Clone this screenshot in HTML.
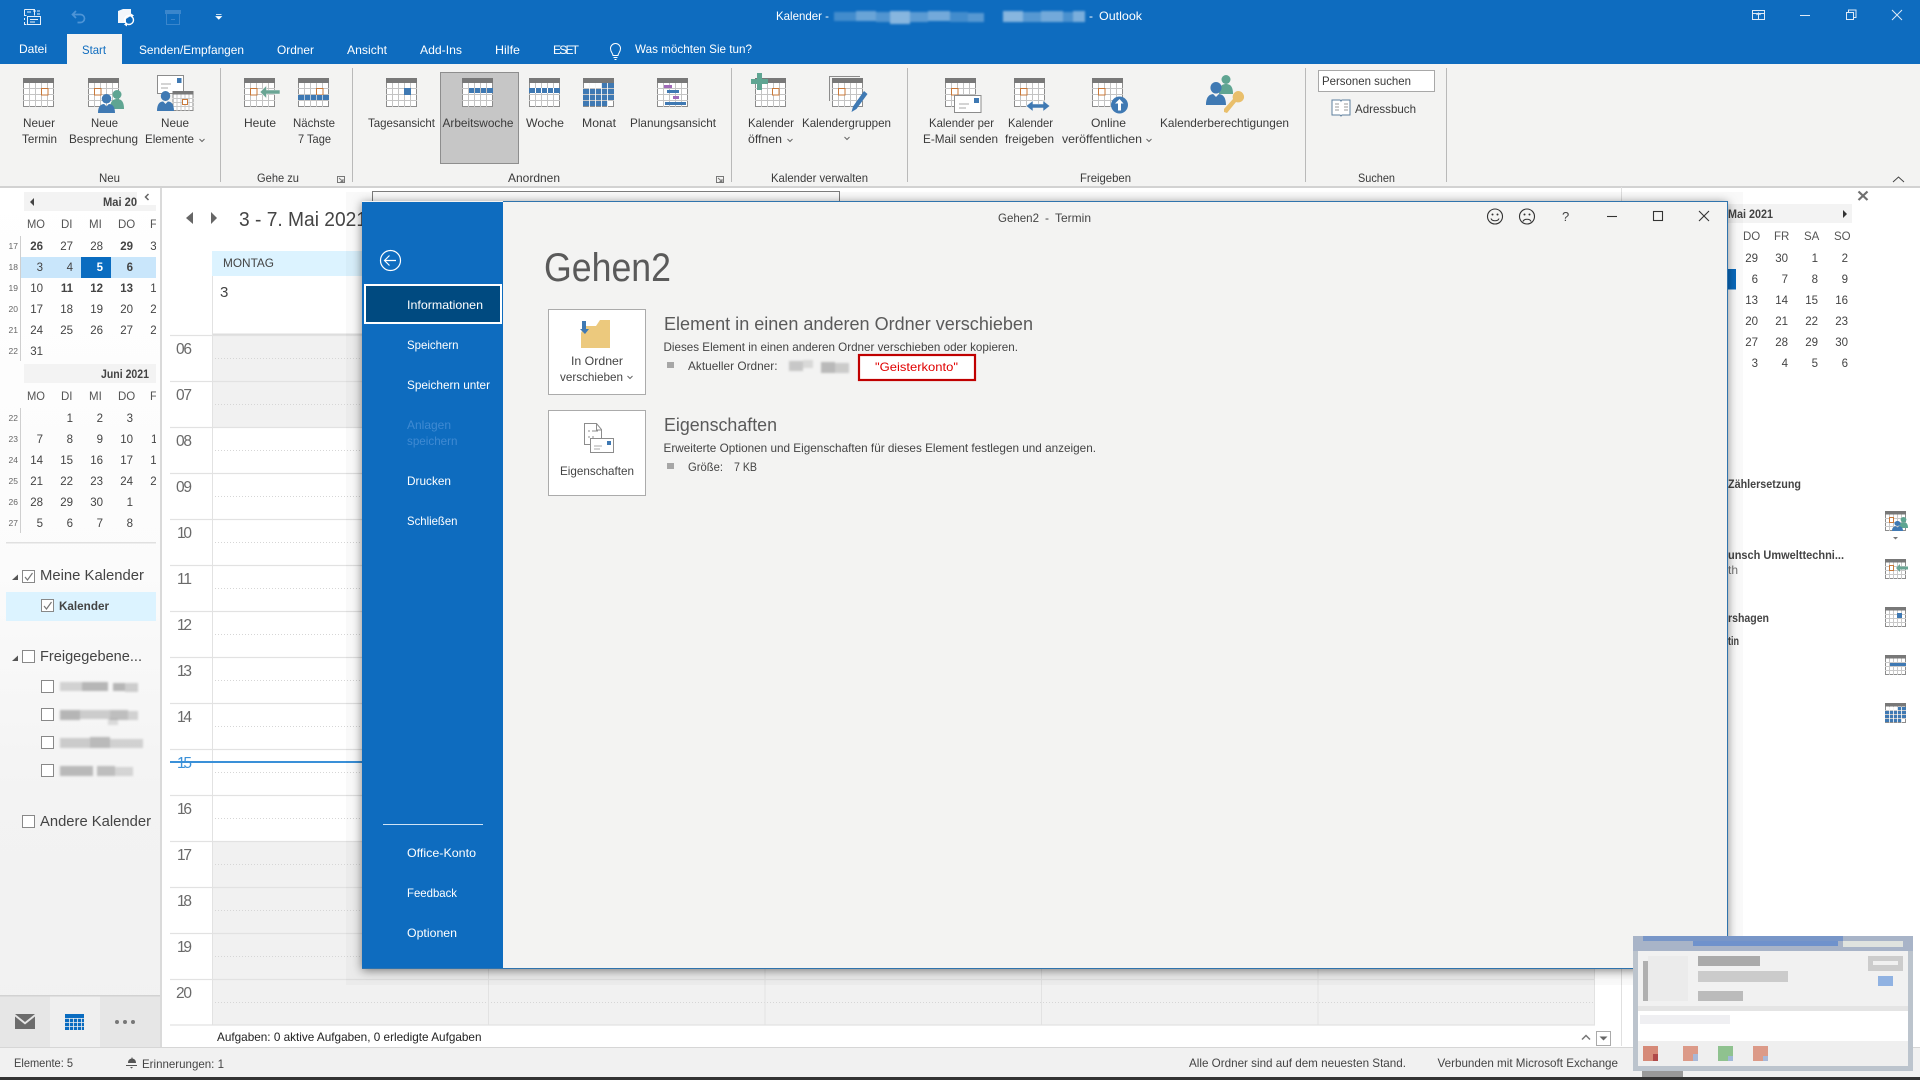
<!DOCTYPE html>
<html lang="de"><head><meta charset="utf-8"><title>Kalender - Outlook</title>
<style>
html,body{margin:0;padding:0;background:#fff;width:1920px;height:1080px;overflow:hidden}
svg{display:block;font-family:"Liberation Sans",sans-serif}
text{font-size:12px;fill:#444}
.w text,text.w{fill:#fff}
.b{font-weight:bold}
.n text{font-size:11.5px;text-anchor:end;fill:#444}
.wk text{font-size:8.5px;text-anchor:end;fill:#666}
.h text{font-size:11.5px;fill:#555}
.hr text{font-size:15.5px;fill:#6a6a6a}
.rb text{font-size:12px;fill:#3a3a3a}
.bl{filter:blur(1px)}
</style></head><body>
<svg xmlns="http://www.w3.org/2000/svg" width="1920" height="1080" viewBox="0 0 1920 1080">
<defs>
<symbol id="c" width="31" height="29" viewBox="0 0 31 29" overflow="visible">
<rect x=".5" y=".5" width="30" height="28" fill="#fff" stroke="#8c8c8c"/>
<path d="M6.5 4V29M12.5 4V29M18.5 4V29M24.5 4V29M0 10.5H31M0 16.5H31M0 22.5H31" stroke="#c4c4c4" fill="none"/>
<rect width="31" height="5" fill="#787878"/>
</symbol>
<symbol id="s" width="21" height="20" viewBox="0 0 21 20" overflow="visible">
<rect x=".5" y=".5" width="20" height="19" fill="#fff" stroke="#8c8c8c"/>
<path d="M4.5 3V20M8.5 3V20M12.5 3V20M16.5 3V20M0 7.5H21M0 11.5H21M0 15.5H21" stroke="#c9c9c9" fill="none"/>
<rect width="21" height="3.5" fill="#787878"/>
</symbol>
<symbol id="pb" viewBox="0 0 18 20" preserveAspectRatio="none" overflow="visible">
<circle cx="9" cy="5" r="5" fill="#3f79b3"/><path d="M0 20C0 13 3 10.500 6.500 10.500L9 13 11.500 10.500C15 10.500 18 13 18 20Z" fill="#3f79b3"/>
</symbol>
<symbol id="pg" viewBox="0 0 14 19" preserveAspectRatio="none" overflow="visible">
<circle cx="7" cy="4.500" r="4.500" fill="#5fa592"/><path d="M0 19C0 11 3 9 7 9S14 11 14 19Z" fill="#5fa592"/>
</symbol>
<clipPath id="cl1"><rect x="0" y="190" width="156" height="350"/></clipPath>
<linearGradient id="nav" x1="0" y1="0" x2="0" y2="1"><stop offset="0" stop-color="#fff"/><stop offset=".45" stop-color="#fbfbfb"/><stop offset=".7" stop-color="#f3f3f3"/><stop offset="1" stop-color="#f1f1f1"/></linearGradient>
</defs>

<rect width="1920" height="1080" fill="#fff"/>
<rect width="1920" height="64" fill="#0e6cbf"/>
<rect x="67" y="34" width="55" height="30" fill="#f3f3f2"/>
<rect y="64" width="1920" height="122" fill="#f3f3f2"/>
<rect y="186" width="1920" height="2" fill="#d2d2d2"/>

<!-- QAT -->
<path d="M24.500 9.500h10v6M24.500 9.500v6h2M24.500 18v2M24.500 22v2.500h2M27 12h4M33 11h3M37 11h3M37 14h3" fill="none" stroke="#e6f0fa"/>
<rect x="27.500" y="16.500" width="13" height="8" fill="none" stroke="#e6f0fa"/><path d="M30 19.500h8M30 22h5" stroke="#e6f0fa"/>
<path d="M76 11l-3.500 3.500 3.500 3.500M73 14.500h7.500a4 4 0 0 1 0 8h-3" fill="none" stroke="#4d94d6" stroke-width="1.700"/>
<path d="M118 11l5-2h8v7l-2 1-3 2v4h-8z" fill="#f2f6fb"/>
<circle cx="129" cy="20" r="4.500" fill="none" stroke="#fff" stroke-width="1.400"/><path d="M131 13.500l3 2-3 2zM127 26.500l-3-2 3-2z" fill="#fff"/>
<rect x="165" y="10" width="16" height="4" fill="#3a86cc"/><rect x="166.500" y="13.500" width="13" height="11" fill="none" stroke="#3a86cc"/><path d="M171 19.500h4" stroke="#3a86cc"/>
<path d="M216 14.500h5.500M216 16.500h5.500l-2.700 2.700z" fill="#fff" stroke="#fff" stroke-width=".7"/>

<text class="w" x="776" y="20" textLength="53" lengthAdjust="spacingAndGlyphs">Kalender -</text>
<g fill="#fff" class="bl">
<rect x="834" y="12" width="22" height="9" opacity=".22"/><rect x="856" y="11" width="20" height="10" opacity=".38"/><rect x="876" y="12" width="14" height="10" opacity=".28"/><rect x="890" y="11" width="20" height="13" opacity=".5"/><rect x="910" y="12" width="18" height="10" opacity=".32"/><rect x="928" y="11" width="22" height="10" opacity=".42"/><rect x="950" y="12" width="18" height="10" opacity=".22"/><rect x="968" y="13" width="16" height="9" opacity=".3"/><rect x="1003" y="11" width="20" height="11" opacity=".5"/><rect x="1023" y="12" width="18" height="10" opacity=".3"/><rect x="1041" y="11" width="22" height="11" opacity=".42"/><rect x="1063" y="12" width="10" height="10" opacity=".25"/><rect x="1073" y="11" width="12" height="11" opacity=".45"/>
</g>
<text class="w" x="1089" y="20">-</text>
<text class="w" x="1099" y="20" textLength="43" lengthAdjust="spacingAndGlyphs">Outlook</text>

<g class="w">
<text x="19" y="53" textLength="28" lengthAdjust="spacingAndGlyphs">Datei</text>
<text x="139" y="54" textLength="105" lengthAdjust="spacingAndGlyphs">Senden/Empfangen</text>
<text x="277" y="54" textLength="37" lengthAdjust="spacingAndGlyphs">Ordner</text>
<text x="347" y="54" textLength="40" lengthAdjust="spacingAndGlyphs">Ansicht</text>
<text x="420" y="54" textLength="42" lengthAdjust="spacingAndGlyphs">Add-Ins</text>
<text x="495" y="54" textLength="25" lengthAdjust="spacingAndGlyphs">Hilfe</text>
<text x="553" y="54" textLength="25" lengthAdjust="spacing" style="letter-spacing:-1px">ESET</text>
<text x="635" y="53" textLength="117" lengthAdjust="spacingAndGlyphs">Was möchten Sie tun?</text>
</g>
<text x="82" y="54" textLength="24" lengthAdjust="spacingAndGlyphs" style="fill:#0e6cbf">Start</text>
<path d="M613 55.500c0-2-2.500-3.500-2.500-7a5 5 0 0 1 10 0c0 3.500-2.500 5-2.500 7zM613.500 57.500h4M614.500 59.500h2" fill="none" stroke="#fff"/>

<g fill="none" stroke="#dfeaf6">
<rect x="1752.500" y="10.500" width="12" height="9"/><path d="M1752 13.500h13M1758.500 19v-6M1756.500 15l2-2 2 2"/>
<path d="M1800 15.500h10"/>
<rect x="1846.500" y="12.500" width="7" height="7"/><path d="M1848.500 12v-2h7.500v7.500h-2"/>
<path d="M1892 10l10 10M1902 10l-10 10"/>
</g>
<path d="M1893 182l5.500-5 5.500 5" fill="none" stroke="#444"/>

<path d="M220.500 68V182M352.500 68V182M731.500 68V182M907.500 68V182M1305.500 68V182M1446.500 68V182" stroke="#b9b9b9"/>
<rect x="440.500" y="72.500" width="78" height="91" fill="#c6c6c6" stroke="#8e8e8e"/>

<!-- ribbon icons -->
<use href="#c" x="23" y="78"/><rect x="41.500" y="88.500" width="6.500" height="6.500" fill="#fff" stroke="#c9793a"/>
<use href="#c" x="88" y="78"/><rect x="94.500" y="88.500" width="6.500" height="6.500" fill="#fff" stroke="#c9793a"/>
<use href="#pg" x="110" y="90" width="14" height="19"/><use href="#pb" x="98" y="94" width="17" height="19"/>
<rect x="157.500" y="75.500" width="26" height="18" fill="#fff" stroke="#8c8c8c"/><rect x="177" y="78" width="4.500" height="5" fill="#3f79b3"/><path d="M161 84h10M161 88h7" stroke="#aaa"/>
<use href="#s" x="172.500" y="91"/><rect x="182.500" y="99.500" width="5" height="5" fill="#fff" stroke="#c9793a"/>
<use href="#pb" x="157" y="91" width="17" height="20"/>
<use href="#c" x="244" y="78"/><rect x="250.500" y="88.500" width="6.500" height="6.500" fill="#fff" stroke="#c9793a"/>
<path d="M260 92l6.500-6.500V90H280v4H266.500v4.500z" fill="#6aa594" stroke="#f3f3f2" stroke-width=".6"/>
<use href="#c" x="298" y="78"/><rect x="316.500" y="88.500" width="6.500" height="6.500" fill="#fff" stroke="#c9793a"/><rect x="298" y="95" width="31" height="5" fill="#3f79b3"/><path d="M304.500 95v5M310.500 95v5M316.500 95v5M322.500 95v5" stroke="#fff" opacity=".6"/>
<use href="#c" x="386" y="78"/><rect x="404" y="88" width="7" height="7" fill="#3f79b3"/>
<use href="#c" x="462" y="78"/><path d="M469 88h5v5h-5zM475 88h5v5h-5zM481 88h5v5h-5zM487 88h6v5h-6z" fill="#3f79b3"/>
<use href="#c" x="529" y="78"/><rect x="529" y="88" width="31" height="5" fill="#3f79b3"/><path d="M535.500 88v5M541.500 88v5M547.500 88v5M553.500 88v5" stroke="#fff"/>
<use href="#c" x="583" y="78"/><path d="M601 83h13v5h-13zM583 89h31v5H583zM583 95h31v5H583zM583 101h25v5h-25z" fill="#3f79b3"/><path d="M589.500 83v24M595.500 83v24M601.500 83v24M607.500 83v24" stroke="#fff" opacity=".85"/>
<use href="#c" x="657" y="78"/><rect x="664" y="85" width="8" height="3" fill="#a16bb9"/><rect x="667" y="90" width="12" height="3" fill="#3f79b3"/><rect x="673" y="96" width="6" height="3" fill="#a16bb9"/><rect x="665" y="102" width="21" height="3" fill="#3f79b3"/>

<use href="#c" x="755" y="78"/><rect x="772.500" y="88.500" width="6.500" height="6.500" fill="#fff" stroke="#c9793a"/>
<path d="M757 73h5v6h6v5h-6v6h-5v-6h-6v-5h6z" fill="#5fa592"/>
<path d="M829.500 101V76.500H860" fill="none" stroke="#8c8c8c"/>
<use href="#c" x="832" y="78"/><rect x="838.500" y="88.500" width="6.500" height="6.500" fill="#fff" stroke="#c9793a"/>
<path d="M864 91l3.500 3-11 15-5 3 1.500-5.500z" fill="#3f79b3"/>

<use href="#c" x="945" y="78"/><rect x="951.500" y="88.500" width="6.500" height="6.500" fill="#fff" stroke="#c9793a"/>
<rect x="954.500" y="95.500" width="26.500" height="17" fill="#fff" stroke="#8c8c8c"/><rect x="974" y="98" width="5" height="5" fill="#3f79b3"/><path d="M959 104h10M959 108h7" stroke="#aaa"/>
<use href="#c" x="1014" y="78"/><rect x="1020.500" y="88.500" width="6.500" height="6.500" fill="#fff" stroke="#c9793a"/>
<path d="M1026 106l7-5.500v3.500h10v-3.500l7 5.500-7 5.500V108h-10v3.500z" fill="#3f79b3" stroke="#f3f3f2" stroke-width=".6"/>
<use href="#c" x="1092" y="78"/><rect x="1098.500" y="88.500" width="6.500" height="6.500" fill="#fff" stroke="#c9793a"/>
<circle cx="1119.500" cy="105" r="8.500" fill="#3f79b3"/><path d="M1119.500 99l4 4.500h-2.500v7h-3v-7H1115z" fill="#fff"/>
<use href="#pg" x="1219" y="75" width="14" height="19"/><use href="#pb" x="1206" y="82" width="20" height="23"/>
<path d="M1238 91a6 6 0 0 1 6 7 6 6 0 0 1-8 4l-9 11-3-1v-3l9-10a6 6 0 0 1 5-8z" fill="#e9bf6c"/>

<rect x="1318.500" y="70.500" width="116" height="21" fill="#fff" stroke="#a8a8a8"/>
<path d="M1332 100h8a2 2 0 0 1 1 1 2 2 0 0 1 1-1h8v15h-8l-1 1-1-1h-8z" fill="#fff" stroke="#5e7f9e"/><path d="M1335 104h4M1335 107h4M1335 110h4M1344 104h4M1344 107h4M1344 110h4" stroke="#999"/>

<g class="rb">
<text x="23" y="127" textLength="32" lengthAdjust="spacingAndGlyphs">Neuer</text>
<text x="22" y="143" textLength="35" lengthAdjust="spacingAndGlyphs">Termin</text>
<text x="91" y="127" textLength="27" lengthAdjust="spacingAndGlyphs">Neue</text>
<text x="69" y="143" textLength="69" lengthAdjust="spacingAndGlyphs">Besprechung</text>
<text x="161" y="127" textLength="28" lengthAdjust="spacingAndGlyphs">Neue</text>
<text x="145" y="143" textLength="49" lengthAdjust="spacingAndGlyphs">Elemente</text>
<text x="244" y="127" textLength="32" lengthAdjust="spacingAndGlyphs">Heute</text>
<text x="293" y="127" textLength="42" lengthAdjust="spacingAndGlyphs">Nächste</text>
<text x="298" y="143" textLength="33" lengthAdjust="spacingAndGlyphs">7 Tage</text>
<text x="368" y="127" textLength="67" lengthAdjust="spacingAndGlyphs">Tagesansicht</text>
<text x="442.500" y="127" textLength="71" lengthAdjust="spacingAndGlyphs">Arbeitswoche</text>
<text x="526" y="127" textLength="38" lengthAdjust="spacingAndGlyphs">Woche</text>
<text x="582" y="127" textLength="34" lengthAdjust="spacingAndGlyphs">Monat</text>
<text x="630" y="127" textLength="86" lengthAdjust="spacingAndGlyphs">Planungsansicht</text>
<text x="748" y="127" textLength="46" lengthAdjust="spacingAndGlyphs">Kalender</text>
<text x="748" y="143" textLength="34" lengthAdjust="spacingAndGlyphs">öffnen</text>
<text x="802" y="127" textLength="89" lengthAdjust="spacingAndGlyphs">Kalendergruppen</text>
<text x="929" y="127" textLength="65" lengthAdjust="spacingAndGlyphs">Kalender per</text>
<text x="923" y="143" textLength="75" lengthAdjust="spacingAndGlyphs">E-Mail senden</text>
<text x="1008" y="127" textLength="45" lengthAdjust="spacingAndGlyphs">Kalender</text>
<text x="1005" y="143" textLength="49" lengthAdjust="spacingAndGlyphs">freigeben</text>
<text x="1091" y="127" textLength="35" lengthAdjust="spacingAndGlyphs">Online</text>
<text x="1062" y="143" textLength="80" lengthAdjust="spacingAndGlyphs">veröffentlichen</text>
<text x="1160" y="127" textLength="129" lengthAdjust="spacingAndGlyphs">Kalenderberechtigungen</text>
<text x="1322" y="85" textLength="89" lengthAdjust="spacingAndGlyphs">Personen suchen</text>
<text x="1355" y="113" textLength="61" lengthAdjust="spacingAndGlyphs">Adressbuch</text>
<text x="99" y="182" textLength="21" lengthAdjust="spacingAndGlyphs">Neu</text>
<text x="257" y="182" textLength="42" lengthAdjust="spacingAndGlyphs">Gehe zu</text>
<text x="508" y="182" textLength="52" lengthAdjust="spacingAndGlyphs">Anordnen</text>
<text x="771" y="182" textLength="97" lengthAdjust="spacingAndGlyphs">Kalender verwalten</text>
<text x="1080" y="182" textLength="51" lengthAdjust="spacingAndGlyphs">Freigeben</text>
<text x="1358" y="182" textLength="37" lengthAdjust="spacingAndGlyphs">Suchen</text>
</g>
<path d="M199.500 139l2.500 2.500 2.500-2.500M787.500 139l2.500 2.500 2.500-2.500M844.500 137l2.500 2.500 2.500-2.500M1146.500 139l2.500 2.500 2.500-2.500" fill="none" stroke="#666"/>
<path d="M337.500 176.500h7v6h-7zM339 178l4 3.500M343 179v2.500h-2.500M716.500 176.500h7v6h-7zM718 178l4 3.500M722 179v2.500h-2.500" fill="none" stroke="#777"/>

<!-- left nav -->
<rect x="0" y="188" width="160" height="859" fill="url(#nav)"/>
<rect x="160" y="188" width="2" height="859" fill="#dadada"/>
<rect x="24" y="192" width="132" height="19" fill="#f3f3f3"/>
<path d="M30 202l4-4v8z" fill="#444"/>
<text class="b" x="103" y="206" textLength="34" lengthAdjust="spacingAndGlyphs">Mai 20</text>
<rect x="137" y="190" width="19" height="15" fill="#fff"/>
<path d="M148.500 194l-3 3 3 3" fill="none" stroke="#666" stroke-width="1.500"/>
<rect x="20" y="257" width="136" height="21" fill="#c9e6fb"/>
<rect x="81" y="257" width="30" height="21" fill="#0a6cc0"/>
<path d="M20.500 236V361M20.500 408V533" stroke="#cfcfcf"/>
<rect x="24" y="364" width="132" height="19" fill="#f3f3f3"/>
<text class="b" x="101" y="378" textLength="48" lengthAdjust="spacingAndGlyphs">Juni 2021</text>
<rect x="6" y="542" width="150" height="1.500" fill="#e0e0e0"/>

<g clip-path="url(#cl1)">
<g class="h">
<text x="27" y="228" textLength="18" lengthAdjust="spacingAndGlyphs">MO</text><text x="61" y="228">DI</text><text x="89" y="228">MI</text><text x="118" y="228">DO</text><text x="150" y="228">F</text>
<text x="27" y="400" textLength="18" lengthAdjust="spacingAndGlyphs">MO</text><text x="61" y="400">DI</text><text x="89" y="400">MI</text><text x="118" y="400">DO</text><text x="150" y="400">F</text>
</g>
<g class="n">
<text x="43" y="250" class="b">26</text><text x="73" y="250">27</text><text x="103" y="250">28</text><text x="133" y="250" class="b">29</text><text x="163" y="250">30</text>
<text x="43" y="271">3</text><text x="73" y="271">4</text><text x="103" y="271" class="b" style="fill:#fff">5</text><text x="133" y="271" class="b">6</text>
<text x="43" y="292">10</text><text x="73" y="292" class="b">11</text><text x="103" y="292" class="b">12</text><text x="133" y="292" class="b">13</text><text x="163" y="292">14</text>
<text x="43" y="313">17</text><text x="73" y="313">18</text><text x="103" y="313">19</text><text x="133" y="313">20</text><text x="163" y="313">21</text>
<text x="43" y="334">24</text><text x="73" y="334">25</text><text x="103" y="334">26</text><text x="133" y="334">27</text><text x="163" y="334">28</text>
<text x="43" y="355">31</text>
<text x="73" y="422">1</text><text x="103" y="422">2</text><text x="133" y="422">3</text>
<text x="43" y="443">7</text><text x="73" y="443">8</text><text x="103" y="443">9</text><text x="133" y="443">10</text><text x="163" y="443">11</text>
<text x="43" y="464">14</text><text x="73" y="464">15</text><text x="103" y="464">16</text><text x="133" y="464">17</text><text x="163" y="464">18</text>
<text x="43" y="485">21</text><text x="73" y="485">22</text><text x="103" y="485">23</text><text x="133" y="485">24</text><text x="163" y="485">25</text>
<text x="43" y="506">28</text><text x="73" y="506">29</text><text x="103" y="506">30</text><text x="133" y="506">1</text>
<text x="43" y="527">5</text><text x="73" y="527">6</text><text x="103" y="527">7</text><text x="133" y="527">8</text>
</g>
</g>
<g class="wk">
<text x="18" y="249">17</text><text x="18" y="270">18</text><text x="18" y="291">19</text><text x="18" y="312">20</text><text x="18" y="333">21</text><text x="18" y="354">22</text>
<text x="18" y="421">22</text><text x="18" y="442">23</text><text x="18" y="463">24</text><text x="18" y="484">25</text><text x="18" y="505">26</text><text x="18" y="526">27</text>
</g>

<path d="M12 580l6-5.500v5.500z" fill="#555"/><path d="M12 661l6-5.500v5.500z" fill="#555"/>
<g fill="#fff" stroke="#888"><rect x="22.500" y="570.500" width="12" height="12"/><rect x="22.500" y="650.500" width="12" height="12"/><rect x="22.500" y="815.500" width="12" height="12"/></g>
<rect x="6" y="592" width="150" height="29" fill="#dcf3ff"/>
<g fill="#fff" stroke="#888"><rect x="41.500" y="599.500" width="12" height="12"/><rect x="41.500" y="680.500" width="12" height="12"/><rect x="41.500" y="708.500" width="12" height="12"/><rect x="41.500" y="736.500" width="12" height="12"/><rect x="41.500" y="764.500" width="12" height="12"/></g>
<path d="M25 577l2.500 3 5-7M44 606l2.500 3 5-7" fill="none" stroke="#777" stroke-width="1.200"/>
<text x="40" y="580" textLength="104" lengthAdjust="spacingAndGlyphs" style="font-size:15px;fill:#444">Meine Kalender</text>
<text x="40" y="661" textLength="102" lengthAdjust="spacingAndGlyphs" style="font-size:15px;fill:#444">Freigegebene...</text>
<text x="40" y="826" textLength="111" lengthAdjust="spacingAndGlyphs" style="font-size:15px;fill:#444">Andere Kalender</text>
<text class="b" x="59" y="610" textLength="50" lengthAdjust="spacingAndGlyphs">Kalender</text>
<g fill="#9a9a9a" class="bl">
<rect x="60" y="682" width="22" height="9" opacity=".4"/><rect x="82" y="682" width="26" height="9" opacity=".7"/><rect x="113" y="683" width="12" height="8" opacity=".7"/><rect x="125" y="683" width="13" height="9" opacity=".45"/>
<rect x="60" y="710" width="20" height="10" opacity=".7"/><rect x="80" y="710" width="30" height="9" opacity=".45"/><rect x="110" y="710" width="18" height="10" opacity=".6"/><rect x="128" y="711" width="10" height="9" opacity=".4"/><rect x="108" y="718" width="10" height="7" opacity=".3"/>
<rect x="60" y="738" width="30" height="10" opacity=".45"/><rect x="90" y="737" width="20" height="11" opacity=".65"/><rect x="110" y="739" width="33" height="9" opacity=".4"/>
<rect x="60" y="766" width="33" height="10" opacity=".65"/><rect x="97" y="766" width="18" height="10" opacity=".6"/><rect x="115" y="767" width="18" height="9" opacity=".35"/>
</g>
<rect x="0" y="996" width="160" height="51" fill="#e6e6e6"/><rect x="50" y="996" width="50" height="51" fill="#efefef"/><rect y="995" width="160" height="1.500" fill="#d2d2d2"/>
<path d="M15 1014h20l-10 8zM15 1016.500V1029h20v-12.500l-10 8z" fill="#6c6c6c"/>
<rect x="65" y="1014" width="19" height="16" fill="#0a6cc0"/><path d="M65 1018.500h19M65 1022.500h19M65 1026.500h19M69.500 1018v12M73.500 1018v12M77.500 1018v12M81.500 1018v12" stroke="#efefef" stroke-width=".8"/>
<g fill="#777"><circle cx="117" cy="1022" r="2"/><circle cx="125" cy="1022" r="2"/><circle cx="133" cy="1022" r="2"/></g>

<!-- calendar -->
<path d="M186 218l7-6v12z" fill="#666"/><path d="M211 212l6 6-6 6z" fill="#666"/>
<text x="239" y="226" style="font-size:20px;fill:#444" textLength="128" lengthAdjust="spacingAndGlyphs">3 - 7. Mai 2021</text>
<rect x="212" y="251" width="1383" height="25" fill="#dcf3ff"/>
<text x="223" y="267" textLength="51" lengthAdjust="spacingAndGlyphs">MONTAG</text>
<text x="220" y="297" style="font-size:15px;fill:#444">3</text>
<rect x="212" y="335" width="1383" height="92" fill="#f1f1f1"/>
<rect x="212" y="841" width="1383" height="184" fill="#f1f1f1"/>
<rect x="212" y="333.500" width="1383" height="2" fill="#dedede"/>
<path d="M170 335.500H1595M170 381.500H1595M170 427.500H1595M170 473.500H1595M170 519.500H1595M170 565.500H1595M170 611.500H1595M170 657.500H1595M170 703.500H1595M170 749.500H1595M170 795.500H1595M170 841.500H1595M170 887.500H1595M170 933.500H1595M170 979.500H1595M170 1025H1595" stroke="#e2e2e2" stroke-width="1.200"/>
<path d="M212 358.500H1595M212 404.500H1595M212 450.500H1595M212 496.500H1595M212 542.500H1595M212 588.500H1595M212 634.500H1595M212 680.500H1595M212 726.500H1595M212 772.500H1595M212 818.500H1595M212 864.500H1595M212 910.500H1595M212 956.500H1595M212 1002.500H1595" stroke="#d6d6d6" stroke-dasharray="1 2"/>
<path d="M212.500 276V1025M488.500 276V1025M765 276V1025M1041.500 276V1025M1318 276V1025M1594.500 276V1025" stroke="#e2e2e2"/>
<path d="M1621.500 187V1046" stroke="#e0e0e0"/>
<g class="hr">
<text x="176" y="354" textLength="16">06</text><text x="176" y="400" textLength="16">07</text><text x="176" y="446" textLength="16">08</text><text x="176" y="492" textLength="16">09</text><text x="177" y="538" textLength="15">10</text><text x="177" y="584" textLength="15">11</text><text x="177" y="630" textLength="15">12</text><text x="177" y="676" textLength="15">13</text><text x="177" y="722" textLength="15">14</text><text x="177" y="768" textLength="15" style="fill:#3a90d8">15</text><text x="177" y="814" textLength="15">16</text><text x="177" y="860" textLength="15">17</text><text x="177" y="906" textLength="15">18</text><text x="177" y="952" textLength="15">19</text><text x="176" y="998" textLength="16">20</text>
</g>
<rect x="170" y="761" width="200" height="2" fill="#3a90d8"/>
<rect x="212" y="1026" width="1383" height="20" fill="#fff"/>
<text x="217" y="1041" textLength="264.500" lengthAdjust="spacingAndGlyphs" style="fill:#222">Aufgaben: 0 aktive Aufgaben, 0 erledigte Aufgaben</text>
<path d="M1582 1039.500l4-4 4 4" fill="none" stroke="#777" stroke-width="1.500"/>
<rect x="1596.500" y="1031.500" width="14" height="14" fill="#fff" stroke="#aaa"/><path d="M1599.500 1036.500h8l-4 4z" fill="#666"/>

<!-- right todo bar -->
<rect x="1700" y="204" width="152" height="19" fill="#f3f3f3"/>
<text class="b" x="1728" y="218" textLength="45" lengthAdjust="spacingAndGlyphs">Mai 2021</text>
<path d="M1843 210l4 4-4 4z" fill="#333"/>
<path d="M1858.500 191.500l9 8.500M1867.500 191.500l-9 8.500" stroke="#707070" stroke-width="2.200"/>
<g class="h"><text x="1743" y="240">DO</text><text x="1774" y="240">FR</text><text x="1804" y="240">SA</text><text x="1834" y="240">SO</text></g>
<rect x="1727" y="269" width="9" height="20.500" fill="#0a6cc0"/>
<g class="n">
<text x="1758" y="262">29</text><text x="1788" y="262">30</text><text x="1818" y="262">1</text><text x="1848" y="262">2</text>
<text x="1758" y="283">6</text><text x="1788" y="283">7</text><text x="1818" y="283">8</text><text x="1848" y="283">9</text>
<text x="1758" y="304">13</text><text x="1788" y="304">14</text><text x="1818" y="304">15</text><text x="1848" y="304">16</text>
<text x="1758" y="325">20</text><text x="1788" y="325">21</text><text x="1818" y="325">22</text><text x="1848" y="325">23</text>
<text x="1758" y="346">27</text><text x="1788" y="346">28</text><text x="1818" y="346">29</text><text x="1848" y="346">30</text>
<text x="1758" y="367">3</text><text x="1788" y="367">4</text><text x="1818" y="367">5</text><text x="1848" y="367">6</text>
</g>
<text class="b" x="1728" y="488" textLength="73" lengthAdjust="spacingAndGlyphs">Zählersetzung</text>
<text class="b" x="1728" y="559" textLength="116" lengthAdjust="spacingAndGlyphs">unsch Umwelttechni...</text>
<text x="1728" y="574" style="fill:#777">th</text>
<text class="b" x="1728" y="622" textLength="41" lengthAdjust="spacingAndGlyphs">rshagen</text>
<text class="b" x="1728" y="645" textLength="11" lengthAdjust="spacingAndGlyphs">tin</text>
<use href="#s" x="1885" y="511"/><rect x="1889.500" y="517.500" width="4" height="5" fill="#fff" stroke="#c9793a"/><use href="#pg" x="1899" y="517" width="9" height="11"/><use href="#pb" x="1892" y="521" width="11" height="10"/><path d="M1893 537h5l-2.500 2.500z" fill="#777"/>
<use href="#s" x="1885" y="559"/><rect x="1889.500" y="565.500" width="4" height="5" fill="#fff" stroke="#c9793a"/><path d="M1896 568l4-4v2.500h8v3h-8v2.500z" fill="#6aa594"/>
<use href="#s" x="1885" y="607"/><rect x="1897" y="613" width="5" height="5" fill="#3f79b3"/>
<use href="#s" x="1885" y="655"/><rect x="1890" y="663" width="16" height="3" fill="#3f79b3"/>
<use href="#s" x="1885" y="703"/><path d="M1897 707h9v3h-9zM1885 711h21v3h-21zM1885 715h21v3h-21zM1885 719h17v3h-17z" fill="#3f79b3"/><path d="M1889.500 707v15M1893.500 707v15M1897.500 707v15M1901.500 707v15" stroke="#fff" opacity=".8"/>

<!-- search box behind dialog -->
<rect x="372.500" y="191.500" width="467" height="20" fill="#fff" stroke="#7d7d7d"/>

<!-- dialog -->
<rect x="346" y="192" width="1397" height="793" fill="#000" opacity=".022"/>
<rect x="362" y="201" width="1365.500" height="767.500" fill="#f3f3f2" style="filter:drop-shadow(0 2px 5px rgba(0,0,0,.5))"/>
<rect x="362" y="202" width="141" height="766" fill="#0e6cbf"/>
<path d="M503 201.500H1727.500V968.500H362" fill="none" stroke="#2f73ad"/>
<circle cx="390.500" cy="260.500" r="10" fill="none" stroke="#fff" stroke-width="1.200"/><path d="M396 260.500h-11M389.500 255.500l-5 5 5 5" fill="none" stroke="#fff" stroke-width="1.200"/>
<rect x="365" y="285" width="136" height="38" fill="#004a80" stroke="#fff" stroke-width="2"/>
<g class="w">
<text x="407" y="309" textLength="76" lengthAdjust="spacingAndGlyphs">Informationen</text>
<text x="407" y="349" textLength="51.500" lengthAdjust="spacingAndGlyphs">Speichern</text>
<text x="407" y="389" textLength="83" lengthAdjust="spacingAndGlyphs">Speichern unter</text>
<text x="407" y="485" textLength="44" lengthAdjust="spacingAndGlyphs">Drucken</text>
<text x="407" y="525" textLength="50.500" lengthAdjust="spacingAndGlyphs">Schließen</text>
<text x="407" y="857" textLength="69" lengthAdjust="spacingAndGlyphs">Office-Konto</text>
<text x="407" y="897" textLength="50" lengthAdjust="spacingAndGlyphs">Feedback</text>
<text x="407" y="937" textLength="50" lengthAdjust="spacingAndGlyphs">Optionen</text>
</g>
<text x="407" y="429" textLength="44" lengthAdjust="spacingAndGlyphs" style="fill:#3f8ad2">Anlagen</text>
<text x="407" y="445" textLength="50.500" lengthAdjust="spacingAndGlyphs" style="fill:#3f8ad2">speichern</text>
<rect x="383" y="824" width="100" height="1" fill="#cfe3f5"/>

<text x="998" y="222" textLength="41" lengthAdjust="spacingAndGlyphs">Gehen2</text><text x="1045" y="222">-</text><text x="1055" y="222" textLength="36" lengthAdjust="spacingAndGlyphs">Termin</text>
<g fill="none" stroke="#333" stroke-width="1.100">
<circle cx="1495" cy="216.500" r="7.500"/><path d="M1491 218.500c1 3 7 3 8 0"/><circle cx="1527" cy="216.500" r="7.500"/><path d="M1523 221.500c1-3 7-3 8 0"/>
<path d="M1607 216.500h10"/><rect x="1653.500" y="211.500" width="9" height="9"/><path d="M1699 211l10 10M1709 211l-10 10"/>
</g>
<g fill="#333"><circle cx="1492.500" cy="214.500" r="1"/><circle cx="1497.500" cy="214.500" r="1"/><circle cx="1524.500" cy="214.500" r="1"/><circle cx="1529.500" cy="214.500" r="1"/></g>
<text x="1562" y="221" style="font-size:13px;fill:#444">?</text>

<text x="544" y="281" textLength="127" lengthAdjust="spacingAndGlyphs" style="font-size:40px;fill:#5a5a5a">Gehen2</text>

<rect x="548.500" y="309.500" width="97" height="85" fill="#fff" stroke="#ababab"/>
<path d="M581 333V348H610V320H600L596 326H584z" fill="#ecc97d"/>
<path d="M582 321h4v8h3l-4 5-5-5h2z" fill="#3f79b3"/>
<text x="571" y="365" textLength="52" lengthAdjust="spacingAndGlyphs">In Ordner</text>
<text x="560" y="381" textLength="63" lengthAdjust="spacingAndGlyphs">verschieben</text>
<path d="M627.500 376l2.500 2.500 2.500-2.500" fill="none" stroke="#666"/>
<text x="664" y="330" textLength="369" lengthAdjust="spacingAndGlyphs" style="font-size:18px;fill:#5a5a5a">Element in einen anderen Ordner verschieben</text>
<text x="663.500" y="351" textLength="354.500" lengthAdjust="spacingAndGlyphs">Dieses Element in einen anderen Ordner verschieben oder kopieren.</text>
<rect x="667" y="362" width="7" height="6" fill="#a6a6a6"/>
<text x="688" y="370" textLength="89.500" lengthAdjust="spacingAndGlyphs">Aktueller Ordner:</text>
<g class="bl" fill="#aaa"><rect x="789" y="361" width="14" height="10" opacity=".6"/><rect x="803" y="360" width="10" height="8" opacity=".35"/><rect x="821" y="362" width="14" height="11" opacity=".8"/><rect x="835" y="363" width="14" height="10" opacity=".55"/></g>
<rect x="859" y="355" width="116" height="25" fill="#fff" stroke="#c00000" stroke-width="2.200"/>
<text x="875" y="371" textLength="83" lengthAdjust="spacingAndGlyphs" style="fill:#e00000">"Geisterkonto"</text>

<rect x="548.500" y="410.500" width="97" height="85" fill="#fff" stroke="#ababab"/>
<path d="M584.500 423.500h12l5 6v15h-17z" fill="#fff" stroke="#8c8c8c"/><path d="M596.500 424v6h5M588 431h2M592 431h6M588 437h2M592 437h2" stroke="#8c8c8c" fill="none"/>
<rect x="590.500" y="438.500" width="23" height="14" fill="#fff" stroke="#8c8c8c"/><rect x="607" y="441" width="4" height="4" fill="#3f79b3"/><path d="M594 446h8M594 449h6" stroke="#aaa"/>
<text x="560" y="475" textLength="74" lengthAdjust="spacingAndGlyphs">Eigenschaften</text>
<text x="664" y="431" textLength="113" lengthAdjust="spacingAndGlyphs" style="font-size:18px;fill:#5a5a5a">Eigenschaften</text>
<text x="663.500" y="452" textLength="432.500" lengthAdjust="spacingAndGlyphs">Erweiterte Optionen und Eigenschaften für dieses Element festlegen und anzeigen.</text>
<rect x="667" y="463" width="7" height="6" fill="#a6a6a6"/>
<text x="688" y="471" textLength="35" lengthAdjust="spacingAndGlyphs">Größe:</text>
<text x="734" y="471" textLength="23" lengthAdjust="spacingAndGlyphs">7 KB</text>

<!-- status bar -->
<rect y="1047" width="1920" height="30" fill="#f1f1f1"/><rect y="1047" width="1920" height="1" fill="#d6d6d6"/>
<rect y="1077" width="1920" height="3" fill="#333"/>
<text x="14" y="1067" textLength="59" lengthAdjust="spacingAndGlyphs">Elemente: 5</text>
<path d="M128 1063c0-3 1.500-4 3.500-4.500v-1h1v1c2 .5 3.500 1.500 3.500 4.500zM126 1065h11v1h-11zM130 1067h3l-1.500 1.500z" fill="#555"/>
<text x="142" y="1068" textLength="82" lengthAdjust="spacingAndGlyphs">Erinnerungen: 1</text>
<text x="1189" y="1067" textLength="217" lengthAdjust="spacingAndGlyphs">Alle Ordner sind auf dem neuesten Stand.</text>
<text x="1437.500" y="1067" textLength="180.500" lengthAdjust="spacingAndGlyphs">Verbunden mit Microsoft Exchange</text>

<!-- blurred notification -->
<rect x="1642" y="1071" width="41" height="6" fill="#999"/>
<rect x="1633" y="936" width="280" height="135" fill="#bcc4cd"/>
<rect x="1633" y="936" width="280" height="15" fill="#a8b4c8"/>
<rect x="1643" y="936" width="200" height="5" fill="#7896c8"/><rect x="1693" y="941" width="145" height="5" fill="#6f92cc"/><rect x="1843" y="941" width="60" height="6" fill="#dfe3df"/>
<rect x="1638" y="951" width="270" height="55" fill="#f1f1f1"/>
<rect x="1648" y="956" width="40" height="45" fill="#ebebeb"/><rect x="1643" y="961" width="5" height="40" fill="#b0b0b0"/>
<rect x="1698" y="956" width="62" height="10" fill="#aaa"/><rect x="1698" y="971" width="90" height="11" fill="#cbcbcb"/><rect x="1698" y="991" width="45" height="10" fill="#bbb"/>
<rect x="1868" y="956" width="35" height="15" fill="#ccc"/><rect x="1873" y="961" width="25" height="4" fill="#f0f0f0"/><rect x="1878" y="976" width="15" height="10" fill="#90b2e2"/>
<rect x="1638" y="1006" width="270" height="5" fill="#e4e4e4"/>
<rect x="1638" y="1011" width="270" height="30" fill="#fff"/><rect x="1640" y="1015" width="90" height="9" fill="#efeff2"/>
<rect x="1638" y="1041" width="270" height="25" fill="#efefef"/>
<rect x="1643" y="1046" width="15" height="15" fill="#d68a78"/><rect x="1653" y="1054" width="5" height="7" fill="#b04a4a"/>
<rect x="1683" y="1046" width="15" height="15" fill="#dc9a88"/><rect x="1693" y="1054" width="5" height="7" fill="#a8b8d8"/>
<rect x="1718" y="1046" width="15" height="15" fill="#8fc28f"/><rect x="1728" y="1056" width="5" height="5" fill="#a0b8d8"/>
<rect x="1753" y="1046" width="15" height="15" fill="#dc9a88"/><rect x="1763" y="1056" width="5" height="5" fill="#a8b8d8"/>
</svg>
</body></html>
